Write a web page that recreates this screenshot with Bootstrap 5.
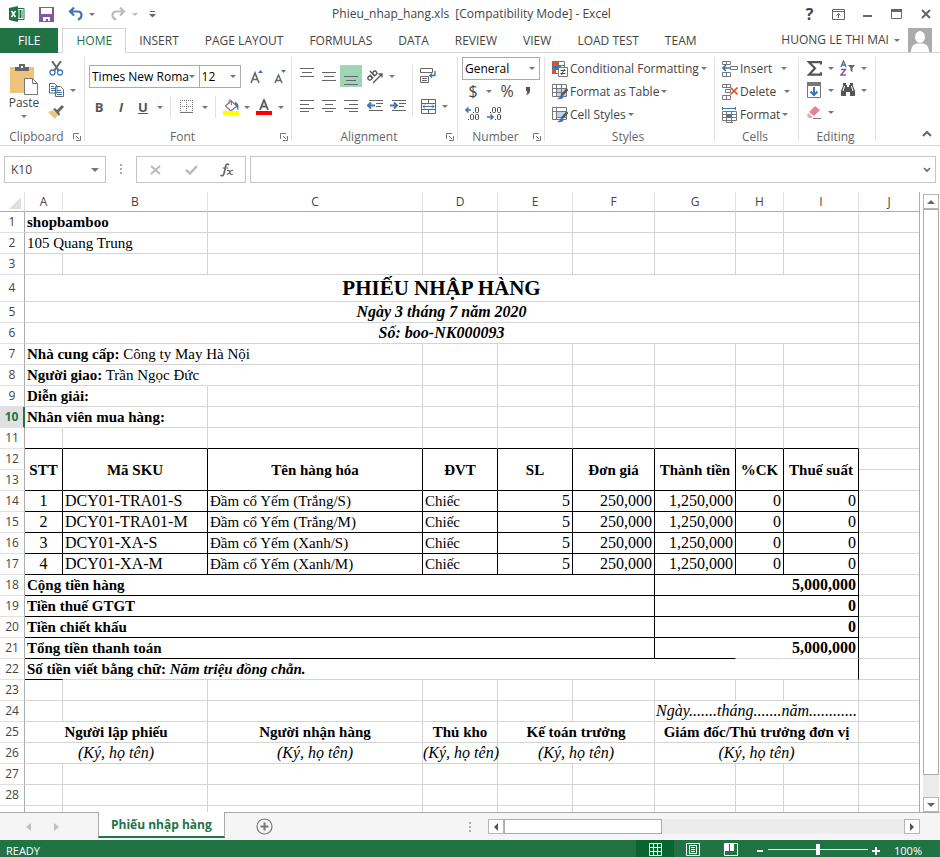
<!DOCTYPE html>
<html lang="vi">
<head>
<meta charset="utf-8">
<meta name="viewport" content="width=device-width, initial-scale=1">
<title>Phieu_nhap_hang.xls - Excel</title>
<link href="https://cdn.jsdelivr.net/npm/bootstrap@5.3.0/dist/css/bootstrap.min.css" rel="stylesheet">
<style>
:root{--xl-green:#217346;--xl-line:#d4d4d4;--xl-mid:#ababab;--xl-ink:#444;--xl-icon:#666}
body{font-family:"Open Sans","Noto Sans",sans-serif;font-size:12px;line-height:16px;color:var(--xl-ink);background:#fff}
svg{display:block;flex:none}
button,select,input{font:inherit;color:inherit}
.ib{display:inline-flex;align-items:center;justify-content:center;border:0;background:none;padding:0;height:22px;flex:none}
.tip::after{content:"";border:3px solid transparent;border-top-color:#777;border-bottom:0}
.tip.pale::after{border-top-color:#bbb}
.w8{width:8px}.w10{width:10px}.w12{width:12px}.w16{width:16px}.w18{width:18px}.w20{width:20px}.w22{width:22px}.w24{width:24px}.w26{width:26px}.w29{width:29px}.w44{width:44px}
.titlebar,.tabs,.ribbon,.formula,.strip,.status{flex:none}
.titlebar{height:28px}
.tabs{height:25px;border-bottom:1px solid var(--xl-line)}
.tabs a{color:var(--xl-ink);text-decoration:none;padding:0 13px;height:25px;line-height:25px;white-space:nowrap}
.tabs a.file-tab{background:var(--xl-green);color:#fff;padding:0 18px;margin-right:4px}
.tabs a.here{color:var(--xl-green);border:1px solid var(--xl-line);border-bottom-color:#fff;background:#fff;line-height:24px}
.ribbon{height:93px;border-bottom:1px solid var(--xl-line);padding-top:4px}
.group{height:88px;background:linear-gradient(#e1e1e1,#e1e1e1) right top/1px 84px no-repeat;padding-right:1px;flex:none;display:flex;flex-direction:column}
.group-foot{height:16px;color:#666;margin-top:auto;display:flex;align-items:center;padding-right:3px}
.group-foot span{flex:1;text-align:center}
.g-clip{width:85px}.g-font{width:207px}.g-align{width:166px}.g-num{width:87px}.g-style{width:170px}.g-cell{width:84px}.g-edit{width:77px}
.vrule{width:1px;height:22px;background:#e1e1e1;flex:none}
.pick{appearance:none;border:1px solid var(--xl-mid);border-radius:0;height:23px;padding:0 2px;color:#000;background:#fff url("data:image/svg+xml,%3Csvg xmlns='http://www.w3.org/2000/svg' width='6' height='3'%3E%3Cpath d='M0 0h6L3 3z' fill='%23777'/%3E%3C/svg%3E") no-repeat right 4px center}
.pick-font{width:112px}.pick-size{width:43px;margin-left:-1px}.pick-num{width:78px}
.font-row{padding-left:3px}
.glyph-b{font-size:13px;font-weight:700;color:#555}
.cmd{display:flex;align-items:center;border:0;background:none;padding:0;height:23px;white-space:nowrap}
.cmd svg{margin-right:2px}
.cmd::after{margin-left:2px}
.cmd-col{padding-left:7px}
.on{background:#9fd5b7}
.formula{height:46px;padding:10px 4px 0}
.formula .box{height:27px;border:1px solid #c6c6c6;background:#fff;display:flex;align-items:center}
.formula input{border:0;outline:0;background:none;min-width:0;padding:0 6px}
.name-box{width:102px}.fx-box{width:110px}
.work{min-height:0}
.grid-wrap{overflow:hidden;min-width:0;border-right:1px solid var(--xl-mid)}
.cells{table-layout:fixed;width:100%;border-collapse:separate;border-spacing:0;color:#000;font-family:"Liberation Serif",serif;font-size:15px;line-height:20px}
.cells th,.cells td{height:21px;padding:0 2px;white-space:nowrap;border-right:1px solid var(--xl-line);border-bottom:1px solid var(--xl-line);vertical-align:middle}
.cells tbody th,.cells thead th{font-family:"Open Sans","Noto Sans",sans-serif;font-size:12px;font-weight:400;color:var(--xl-ink);text-align:center}
.cells thead th{height:20px;line-height:19px;border-bottom-color:var(--xl-mid);border-right-color:#e1e1e1}
.cells tbody th{border-right-color:var(--xl-mid);border-bottom-color:#e1e1e1;padding:0}
.cells tbody th.sel{background:#e1e1e1;color:var(--xl-green);font-weight:700;border-right:2px solid var(--xl-green)}
.cells td:last-child,.cells thead th:last-child{border-right:0}
.cells td.open{border-right-color:transparent}
.cells tr.ruled td:not(:last-child),.cells td.kb{border-bottom-color:#000}
.cells tr.boxed td:not(:last-child),.cells td.kr{border-right-color:#000}
.cells .tall td,.cells .tall th{height:27px}
.fs-title{font-size:21px}
.cells .num{font-size:16px}
.corner{border-style:solid;border-color:transparent transparent #dfdfdf transparent;border-width:0 0 12px 12px;width:0;margin:2px 0 0 9px}
.vbar{width:20px;padding:2px 1px 0 3px;flex:none}
.sbtn{border:1px solid #b5b5b5;background:#fff;width:16px;height:15px;padding:0;display:flex;align-items:center;justify-content:center;flex:none}
.vthumb{border:1px solid var(--xl-mid);background:#fff;flex:567}
.track{background:#ececec;flex:22}
.strip{height:28px;background:#f5f5f5;border-top:1px solid var(--xl-mid)}
.strip .sheet-nav{gap:5px;padding:0 30px 0 17px}
.sheet-tab{height:26px;margin-top:-1px;background:#fff;border:1px solid var(--xl-mid);border-top:0;border-bottom:2px solid var(--xl-green);color:var(--xl-green);font-weight:700;padding:0 12px;line-height:26px;text-decoration:none;align-self:flex-start}
.hbar{width:46%;height:15px;margin-right:20px}
.hbar .hthumb{flex:157;border:1px solid var(--xl-mid);background:#fff}
.hbar .track{flex:243}
.status{height:17px;background:var(--xl-green);color:#fff;overflow:hidden;font-size:11px;padding:0 18px 0 6px}
.status .ib{height:17px;align-items:flex-start;padding-top:3px;width:38px}
.status .active-view{background:#0a6332}
.percent{margin-left:12px}
.zoom{appearance:none;background:linear-gradient(#fff,#fff) center/100% 1px no-repeat;width:100px;height:11px}
.zoom::-webkit-slider-thumb{appearance:none;width:4px;height:11px;background:#fff}
</style>
<script src="https://cdn.jsdelivr.net/npm/bootstrap@5.3.0/dist/js/bootstrap.bundle.min.js"></script>
</head>
<body class="vh-100 d-flex flex-column overflow-hidden">

<header class="titlebar d-flex align-items-center">
  <svg class="ms-2" width="18" height="16" viewBox="0 0 18 16"><path fill="#fff" stroke="#217346" d="M9.500 2.500h6.500v11h-6.500z"/><path stroke="#217346" d="M10 5h5M10 7h5M10 9h5M10 11h5M12.500 4v8"/><path fill="#217346" d="M1 2l9-2v16l-9-2z"/><path stroke="#fff" stroke-width="1.500" d="M3.500 5l4 6M7.500 5l-4 6"/></svg>
  <button class="ib w24 mx-2" aria-label="Save"><svg width="15" height="15"><path fill="#8854a8" d="M0 0h15v15H0z"/><path fill="#fff" d="M2 1h11v6H2zM4 10h7v4H9v-2H7v2H4z"/></svg></button>
  <button class="ib w20" aria-label="Undo"><svg width="16" height="14" viewBox="0 0 16 14"><path fill="none" stroke="#3f76b0" stroke-width="2.200" d="M2 4.500h7.500c5 0 5.500 6 .5 8.300M6 .6L2 4.500l4 4"/></svg></button>
  <button class="ib w12 tip" aria-label="Undo list"></button>
  <button class="ib w24 ms-2" aria-label="Redo"><svg width="16" height="14" viewBox="0 0 16 14"><path fill="none" stroke="#bcbcbc" stroke-width="2.200" d="M14 4.500H6.500c-5 0-5.500 6-.5 8.300M10 .6l4 3.900-4 4"/></svg></button>
  <button class="ib w10 tip pale" aria-label="Redo list"></button>
  <button class="ib w24" aria-label="Customize toolbar"><svg width="7" height="7"><path fill="#666" d="M1 0h5v1H1zM0 3h7L3.500 6.500z"/></svg></button>
  <div class="flex-fill text-center pe-3">Phieu_nhap_hang.xls&nbsp; [Compatibility Mode] - Excel</div>
  <button class="ib w29 fw-bold fs-6" aria-label="Help">?</button>
  <button class="ib w29" aria-label="Ribbon display"><svg width="13" height="11" fill="none" stroke="#666"><path d="M.5.500h12v10H.5zM0 2.500h13M6.500 9V4.500M4.500 6.500l2-2 2 2"/></svg></button>
  <button class="ib w29" aria-label="Minimize"><svg width="9" height="9"><path fill="#666" d="M0 5h9v2H0z"/></svg></button>
  <button class="ib w29" aria-label="Maximize"><svg width="11" height="10"><path fill="none" stroke="#666" d="M.5.500h10v9H.5z"/><path fill="#666" d="M0 0h11v3H0z"/></svg></button>
  <button class="ib w29" aria-label="Close"><svg width="10" height="10"><path stroke="#666" stroke-width="2" d="M1 1l8 8M9 1L1 9"/></svg></button>
</header>

<nav class="tabs d-flex">
  <a class="file-tab" href="#">FILE</a><a class="here" href="#">HOME</a><a href="#">INSERT</a><a href="#">PAGE LAYOUT</a><a href="#">FORMULAS</a><a href="#">DATA</a><a href="#">REVIEW</a><a href="#">VIEW</a><a href="#">LOAD TEST</a><a href="#">TEAM</a>
  <div class="ms-auto d-flex align-items-center pe-2">
    <button class="cmd tip">HUONG LE THI MAI&nbsp;</button>
    <svg class="ms-2" width="24" height="24" viewBox="0 0 24 24"><path fill="#ababab" d="M0 0h24v24H0z"/><ellipse cx="12" cy="9" rx="5" ry="6" fill="#fff"/><path fill="#fff" d="M3 24c0-6 3-8 6-8.500h6c3 .5 6 2.500 6 8.500z"/></svg>
  </div>
</nav>

<section class="ribbon d-flex" aria-label="Ribbon">
  <div class="group g-clip">
    <div class="d-flex">
      <button class="ib w44 h-auto flex-column ps-1" >
        <svg width="30" height="32" viewBox="0 0 30 32"><path fill="#eec37c" d="M1 4h24v26H1z"/><path fill="#666" d="M6 4h4V1h6v3h4v4H6z"/><path fill="#fff" d="M12 3h2v2h-2z"/><path fill="#fff" stroke="#777" d="M15.500 15.500h8l5 5v11h-13z"/><path fill="none" stroke="#777" d="M23.500 15.500v5h5"/></svg>
        <span>Paste</span><span class="tip d-flex mt-1"></span>
      </button>
      <div class="d-flex flex-column">
        <button class="ib w24" aria-label="Cut"><svg width="15" height="15" viewBox="0 0 15 15"><path stroke="#666" stroke-width="2" d="M3 0l7 10M12 0L5 10"/><g fill="none" stroke="#3f76b0" stroke-width="1.300"><circle cx="3.500" cy="11.500" r="2.500"/><circle cx="11" cy="11.500" r="2.500"/></g></svg></button>
        <div class="d-flex"><button class="ib w24" aria-label="Copy"><svg width="15" height="14" viewBox="0 0 15 14"><path fill="#fff" stroke="#666" d="M.5.500h5l2.500 2.500v7H.5zM6.500 3.500h5l3 3v7h-8z"/><path stroke="#3f76b0" d="M2 3.500h3M2 5.500h4M2 7.500h4M8 7.500h4M8 9.500h5M8 11.500h5"/></svg></button><button class="ib w10 tip" aria-label="Copy options"></button></div>
        <button class="ib w24" aria-label="Format Painter"><svg width="16" height="14" viewBox="0 0 16 14"><path fill="#eec37c" d="M0 7l5-2 5 5-3 4z"/><path fill="#666" d="M5 4l2-1 2 2 5-5 2 2-5 5 1 2-1 2z"/></svg></button>
      </div>
    </div>
    <div class="group-foot"><span>Clipboard</span><svg width="8" height="8"><path fill="none" stroke="#777" d="M.5 6V.500H6M3 3l3 3M7.500 3v4.500H3"/></svg></div>
  </div>

  <div class="group g-font">
    <div class="d-flex align-items-center ps-1 mt-2">
      <select class="pick pick-font" aria-label="Font"><option>Times New Roma</option></select>
      <select class="pick pick-size" aria-label="Font size"><option>12</option></select>
      <button class="ib w24 ms-1" aria-label="Grow font"><svg width="14" height="14" fill="none" stroke="#666" stroke-width="1.600"><path d="M1 13L5 3l4 10M2.500 9.500h5"/><path fill="#3f76b0" stroke="none" d="M8 3h5l-2.500-3z"/></svg></button>
      <button class="ib w22" aria-label="Shrink font"><svg width="13" height="14" fill="none" stroke="#666" stroke-width="1.500"><path d="M1 13l3.500-8L8 13M2.500 10.500h4"/><path fill="#3f76b0" stroke="none" d="M7 0h5L9.500 3z"/></svg></button>
    </div>
    <div class="font-row d-flex align-items-center mt-2">
      <button class="ib w22 glyph-b">B</button><button class="ib w22 glyph-b fst-italic">I</button><button class="ib w22 glyph-b text-decoration-underline">U</button><button class="ib w12 tip" aria-label="Underline style"></button>
      <i class="vrule mx-1"></i>
      <button class="ib w24" aria-label="Borders"><svg width="14" height="14" fill="none" stroke="#777"><path stroke-dasharray="1 1" d="M0 .500h13M0 6.500h13M.5 0v13M6.500 0v13M12.500 0v13"/><path d="M0 12.500h13"/></svg></button><button class="ib w12 tip" aria-label="Border list"></button>
      <i class="vrule mx-1"></i>
      <button class="ib w22" aria-label="Fill colour"><svg width="17" height="16" viewBox="0 0 17 16"><path fill="#fff" stroke="#777" stroke-width="1.200" d="M8 2l6 5-6 5-5.500-5z"/><path fill="none" stroke="#777" d="M6 5V1.500Q7 0 8.500 1.500V6"/><path fill="#3f76b0" d="M12 3c4 1 4 5 3 9-1-2-1-5-3-6z"/><path fill="#ff0" d="M0 12h16v4H0z"/></svg></button><button class="ib w10 tip" aria-label="Fill list"></button>
      <button class="ib w24" aria-label="Font colour"><svg width="16" height="16"><path fill="none" stroke="#666" stroke-width="2" d="M4 11l4-10 4 10M5.500 7.500h5"/><path fill="red" d="M0 12h16v4H0z"/></svg></button><button class="ib w10 tip" aria-label="Font colour list"></button>
    </div>
    <div class="group-foot"><span>Font</span><svg width="8" height="8"><path fill="none" stroke="#777" d="M.5 6V.500H6M3 3l3 3M7.500 3v4.500H3"/></svg></div>
  </div>

  <div class="group g-align">
    <div class="d-flex ps-1 pt-2">
      <div class="d-flex flex-column gap-2">
        <div class="d-flex">
          <button class="ib w22" aria-label="Top align"><svg width="14" height="18" stroke="#666"><path d="M0 1.500h14M2 5.500h10M0 9.500h14"/></svg></button>
          <button class="ib w22" aria-label="Middle align"><svg width="14" height="18" stroke="#666"><path d="M0 5.500h14M2 9.500h10M0 13.500h14"/></svg></button>
          <button class="ib w22 on" aria-label="Bottom align"><svg width="14" height="18" stroke="#666"><path d="M0 9.500h14M2 13.500h10M0 17.500h14"/></svg></button>
          <button class="ib w26" aria-label="Orientation"><svg width="18" height="18" viewBox="0 0 18 18" fill="none" stroke="#555" stroke-width="1.300"><g transform="rotate(-45 6 9)"><circle cx="3" cy="9" r="2"/><path d="M5.300 6.500v5M8 4v7.500"/><circle cx="10" cy="9" r="2"/></g><path d="M7 16l9-9M12.500 7H16v3.500"/></svg></button>
          <button class="ib w8 tip" aria-label="Orientation list"></button>
        </div>
        <div class="d-flex">
          <button class="ib w22" aria-label="Align left"><svg width="14" height="12" stroke="#666"><path d="M0 .500h14M0 4.500h9M0 8.500h14M0 11.500h9"/></svg></button>
          <button class="ib w22" aria-label="Center"><svg width="14" height="12" stroke="#666"><path d="M0 .500h14M3 4.500h8M0 8.500h14M3 11.500h8"/></svg></button>
          <button class="ib w22" aria-label="Align right"><svg width="14" height="12" stroke="#666"><path d="M0 .500h14M5 4.500h9M0 8.500h14M5 11.500h9"/></svg></button>
          <button class="ib w26" aria-label="Decrease indent"><svg width="16" height="12"><path stroke="#666" d="M2 .500h14M9 3.500h7M9 6.500h5M2 10.500h14"/><path fill="none" stroke="#3f76b0" stroke-width="2" d="M8 5.500H1M4 2.500l-3 3 3 3"/></svg></button>
          <button class="ib w20" aria-label="Increase indent"><svg width="16" height="12"><path stroke="#666" d="M2 .500h14M9 3.500h7M9 6.500h5M2 10.500h14"/><path fill="none" stroke="#3f76b0" stroke-width="2" d="M0 5.500h7M4 2.500l3 3-3 3"/></svg></button>
        </div>
      </div>
      <i class="vrule h-auto ms-1 me-1"></i>
      <div class="d-flex flex-column gap-2">
        <button class="ib w22" aria-label="Wrap text"><svg width="17" height="16" fill="none" stroke="#666"><path d="M.5.500h12v4H.5zM.5 8.500h8v6H.5zM2 10.500h5M2 12.500h5"/><path stroke="#3f76b0" stroke-width="1.400" d="M15 3v4.500h-5M12 5.500l-2 2 2 2"/></svg></button>
        <div class="d-flex"><button class="ib w22" aria-label="Merge and center"><svg width="15" height="15" fill="none" stroke="#666"><path d="M.5.500h14v14H.5zM0 4.500h15M0 10.500h15M7.500 0v4M7.500 11v4"/><path stroke="#3f76b0" d="M2 7.500h11M4 5.500l-2 2 2 2M11 5.500l2 2-2 2"/></svg></button><button class="ib w12 tip" aria-label="Merge list"></button></div>
      </div>
    </div>
    <div class="group-foot"><span>Alignment</span><svg width="8" height="8"><path fill="none" stroke="#777" d="M.5 6V.500H6M3 3l3 3M7.500 3v4.500H3"/></svg></div>
  </div>

  <div class="group g-num">
    <div class="ps-1">
      <select class="pick pick-num d-block" aria-label="Number format"><option>General</option></select>
      <div class="d-flex"><button class="ib w22 fs-6">$</button><button class="ib w10 tip" aria-label="Currency list"></button><button class="ib w26 fs-6">%</button><button class="ib w16" aria-label="Comma style"><svg width="6" height="8"><path fill="#555" d="M1 0h4v4Q5 7 1 8q2-2 1-4H1z"/></svg></button></div>
      <div class="d-flex"><button class="ib w22" aria-label="Increase decimal"><svg width="16" height="15" fill="none" stroke="#444"><path d="M8 6.500h1M3 13.500h1"/><rect x="10.500" y="1.500" width="3" height="5" rx="1"/><rect x="5.500" y="8.500" width="3" height="5" rx="1"/><rect x="10.500" y="8.500" width="3" height="5" rx="1"/><path stroke="#3f76b0" stroke-width="1.600" d="M6 4H1M3.500 1.500L1 4l2.500 2.500"/></svg></button><button class="ib w22" aria-label="Decrease decimal"><svg width="16" height="15" fill="none" stroke="#444"><path d="M3 6.500h1M8 13.500h1"/><rect x="5.500" y="1.500" width="3" height="5" rx="1"/><rect x="10.500" y="1.500" width="3" height="5" rx="1"/><rect x="10.500" y="8.500" width="3" height="5" rx="1"/><path stroke="#3f76b0" stroke-width="1.600" d="M0 11h5.500M3.500 8.500L6 11l-2.500 2.500"/></svg></button></div>
    </div>
    <div class="group-foot"><span>Number</span><svg width="8" height="8"><path fill="none" stroke="#777" d="M.5 6V.500H6M3 3l3 3M7.500 3v4.500H3"/></svg></div>
  </div>

  <div class="group g-style">
    <div class="cmd-col">
      <button class="cmd tip"><svg width="16" height="16" fill="none" stroke="#777"><path d="M.5.500h12v12H.5zM0 4.500h12M0 8.500h12M6.500 0v12"/><path fill="#d9532c" stroke="none" d="M0 0h6v4H0zM0 9h4v4H0z"/><path fill="#3f76b0" stroke="none" d="M0 5h9v3H0z"/><path fill="#fff" d="M6.500 6.500h9v9h-9z"/><path stroke="#444" d="M8.500 9.500h5M8.500 12.500h5M12.500 8l-3 6"/></svg>Conditional Formatting</button>
      <button class="cmd tip"><svg width="16" height="16" fill="none" stroke="#777"><path fill="#fff" d="M.5.500h14v12H.5z"/><path fill="#bcd3ea" d="M4.500 4.500h10v8h-10z"/><path d="M0 4.500h15M0 8.500h15M4.500 0v12M9.500 0v12"/><path stroke="#555" stroke-width="2.500" d="M15.500 5L10 11"/><path fill="#3f76b0" stroke="none" d="M9 10l3 2q-1 4-7 3 3-1 4-5z"/></svg>Format as Table</button>
      <button class="cmd tip"><svg width="16" height="16" fill="none" stroke="#777"><path fill="#fff" d="M.5.500h14v12H.5z"/><path fill="#bcd3ea" d="M4.500 4.500h10v6h-10z"/><path d="M0 4.500h15M4.500 0v12"/><path stroke="#555" stroke-width="2.500" d="M15.500 5L10 11"/><path fill="#3f76b0" stroke="none" d="M9 10l3 2q-1 4-7 3 3-1 4-5z"/></svg>Cell Styles</button>
    </div>
    <div class="group-foot"><span>Styles</span></div>
  </div>

  <div class="group g-cell">
    <div class="cmd-col">
      <button class="cmd tip"><svg width="16" height="16" fill="none" stroke="#777"><path d="M.5.500h8v3h-8zM4.500 0v3M.5 11.500h8v4h-8zM4.500 11v4M8.500 5.500h7v3h-7z"/><path stroke="#3f76b0" stroke-width="1.600" d="M8 7H1M4 4L1 7l3 3"/></svg>Insert&nbsp;&nbsp;</button>
      <button class="cmd tip"><svg width="16" height="16" fill="none" stroke="#777"><path d="M.5.500h8v3h-8zM4.500 0v3M.5 11.500h8v4h-8zM4.500 11v4M3.500 5.500h5v3h-5z"/><path stroke="#d9532c" stroke-width="1.600" d="M8.500 3.500l7 7M15.500 3.500l-7 7"/></svg>Delete&nbsp;&nbsp;</button>
      <button class="cmd tip"><svg width="16" height="16" fill="none" stroke="#777"><path d="M.5 4.500h14v9H.5zM0 7.500h15M0 10.500h15M4.500 4v11M9.500 4v11M4 15.500h7"/><path fill="#3f76b0" stroke="none" d="M5 7h5v4H5z"/><path stroke="#3f76b0" d="M.5 0v3M13.500 0v3M1 1.500h12"/></svg>Format</button>
    </div>
    <div class="group-foot"><span>Cells</span></div>
  </div>

  <div class="group g-edit">
    <div class="ps-1">
      <div class="d-flex"><button class="ib w22" aria-label="Sum"><svg width="15" height="15"><path fill="none" stroke="#555" stroke-width="2.200" d="M14 3.500V1.200H2l6 6-6 6.500h12v-2.500"/></svg></button><button class="ib w12 tip" aria-label="Sum list"></button><button class="ib w22" aria-label="Sort and filter"><svg width="16" height="16" fill="none" stroke-width="1.400"><path stroke="#3f76b0" d="M1 7l2.500-6L6 7M2 5h3"/><path stroke="#8854a8" d="M1 9.500h4.500L1 15h5"/><path fill="#666" d="M8 5h7l-2.500 3v4l-2-1V8z"/></svg></button><button class="ib w10 tip" aria-label="Sort list"></button></div>
      <div class="d-flex"><button class="ib w22" aria-label="Fill"><svg width="14" height="16"><path fill="#fff" stroke="#777" d="M.5.500h13v15H.5z"/><path fill="#777" d="M0 0h14v4H0z"/><path fill="none" stroke="#3f76b0" stroke-width="2" d="M7 5v8M3.500 9.500L7 13l3.500-3.500"/></svg></button><button class="ib w12 tip" aria-label="Fill options"></button><button class="ib w22" aria-label="Find"><svg width="16" height="14"><path fill="#555" d="M3 0h3v2h1v2h2V2h1V0h3v3l2 5v5h-5V9H6v4H1V8l2-5z"/><path stroke="#fff" d="M4.500 3L3 8M11.500 3L13 8"/></svg></button><button class="ib w10 tip" aria-label="Find options"></button></div>
      <div class="d-flex"><button class="ib w22" aria-label="Clear"><svg width="14" height="13"><path fill="#e8829a" d="M8 0l5 4-6 6-5-4z"/><path fill="#e8a5b4" d="M1 7l5 4-2 1H2L0 10z"/><path stroke="#777" d="M6 12.500h8"/></svg></button><button class="ib w12 tip" aria-label="Clear options"></button></div>
    </div>
    <div class="group-foot"><span>Editing</span></div>
  </div>
  <button class="ib w18 ms-auto align-self-end me-1" aria-label="Collapse ribbon"><svg width="10" height="6"><path fill="none" stroke="#666" stroke-width="2" d="M1 5l4-4 4 4"/></svg></button>
</section>

<section class="formula d-flex">
  <div class="box name-box"><input class="w-75" aria-label="Name box" value="K10"><button class="ib w20 ms-auto" aria-label="Names"><svg width="8" height="4"><path fill="#777" d="M0 0h8L4 4z"/></svg></button></div>
  <svg width="30" height="27"><path fill="#aaa" d="M14 8h2v2h-2zM14 12h2v2h-2zM14 16h2v2h-2z"/></svg>
  <div class="box fx-box justify-content-around">
    <button class="ib w24" aria-label="Cancel"><svg width="11" height="10"><path stroke="#bbb" stroke-width="2" d="M1 1l9 8M10 1L1 9"/></svg></button>
    <button class="ib w24" aria-label="Enter"><svg width="13" height="10"><path fill="none" stroke="#bbb" stroke-width="2.500" d="M1 5l4 3.500L12 1"/></svg></button>
    <button class="ib w24" aria-label="Insert function"><svg width="14" height="16" fill="none" stroke="#666" stroke-linecap="round"><path stroke-width="1.700" d="M8.500 2.500Q6.500 1 5.700 4L4 11.500Q3.200 14.500 1 13.500"/><path stroke-width="1.200" d="M3 6h5M7.500 8.500q1.500-.7 2 1l.8 2q.5 1.500 2 .7M12.500 8.300Q11 8 10 10t-2.700 2.200"/></svg></button>
  </div>
  <div class="box flex-fill ms-1"><input class="flex-fill" aria-label="Formula"><button class="ib w16" aria-label="Expand formula bar"><svg width="8" height="6"><path fill="none" stroke="#666" stroke-width="1.600" d="M1 1l3 3 3-3"/></svg></button></div>
</section>

<main class="work d-flex flex-fill">
  <div class="grid-wrap flex-fill">
    <table class="cells">
      <colgroup><col style="width:25px"><col style="width:38px"><col style="width:145px"><col style="width:215px"><col style="width:75px"><col style="width:75px"><col style="width:82px"><col style="width:81px"><col style="width:48px"><col style="width:75px"><col></colgroup>
      <thead><tr><th class="p-0" aria-label="Select all"><div class="corner"></div></th><th>A</th><th>B</th><th>C</th><th>D</th><th>E</th><th>F</th><th>G</th><th>H</th><th>I</th><th>J</th></tr></thead>
      <tbody>
        <tr><th>1</th><td class="open fw-bold">shopbamboo</td><td></td><td></td><td></td><td></td><td></td><td></td><td></td><td></td><td></td></tr>
        <tr><th>2</th><td class="open">105 Quang Trung</td><td></td><td></td><td></td><td></td><td></td><td></td><td></td><td></td><td></td></tr>
        <tr><th>3</th><td></td><td></td><td></td><td></td><td></td><td></td><td></td><td></td><td></td><td></td></tr>
        <tr class="tall"><th>4</th><td colspan="9" class="text-center fw-bold fs-title">PHIẾU NHẬP HÀNG</td><td></td></tr>
        <tr><th>5</th><td colspan="9" class="text-center fw-bold fst-italic num">Ngày 3 tháng 7 năm 2020</td><td></td></tr>
        <tr><th>6</th><td colspan="9" class="text-center fw-bold fst-italic num">Số: boo-NK000093</td><td></td></tr>
        <tr><th>7</th><td class="open"><b>Nhà cung cấp:</b> Công ty May Hà Nội</td><td class="open"></td><td></td><td></td><td></td><td></td><td></td><td></td><td></td><td></td></tr>
        <tr><th>8</th><td class="open"><b>Người giao:</b> Trần Ngọc Đức</td><td class="open"></td><td></td><td></td><td></td><td></td><td></td><td></td><td></td><td></td></tr>
        <tr><th>9</th><td class="open fw-bold">Diễn giải:</td><td></td><td></td><td></td><td></td><td></td><td></td><td></td><td></td><td></td></tr>
        <tr><th class="sel">10</th><td class="open fw-bold">Nhân viên mua hàng:</td><td></td><td></td><td></td><td></td><td></td><td></td><td></td><td></td><td></td></tr>
        <tr class="ruled"><th>11</th><td></td><td></td><td></td><td></td><td></td><td></td><td></td><td></td><td></td><td></td></tr>
        <tr class="ruled boxed text-center fw-bold"><th>12</th><td rowspan="2">STT</td><td rowspan="2">Mã SKU</td><td rowspan="2">Tên hàng hóa</td><td rowspan="2">ĐVT</td><td rowspan="2">SL</td><td rowspan="2">Đơn giá</td><td rowspan="2">Thành tiền</td><td rowspan="2">%CK</td><td rowspan="2">Thuế suất</td><td></td></tr>
        <tr><th>13</th><td></td></tr>
        <tr class="ruled boxed"><th>14</th><td class="text-center num">1</td><td class="num">DCY01-TRA01-S</td><td>Đầm cổ Yếm (Trắng/S)</td><td>Chiếc</td><td class="text-end num">5</td><td class="text-end num">250,000</td><td class="text-end num">1,250,000</td><td class="text-end num">0</td><td class="text-end num">0</td><td></td></tr>
        <tr class="ruled boxed"><th>15</th><td class="text-center num">2</td><td class="num">DCY01-TRA01-M</td><td>Đầm cổ Yếm (Trắng/M)</td><td>Chiếc</td><td class="text-end num">5</td><td class="text-end num">250,000</td><td class="text-end num">1,250,000</td><td class="text-end num">0</td><td class="text-end num">0</td><td></td></tr>
        <tr class="ruled boxed"><th>16</th><td class="text-center num">3</td><td class="num">DCY01-XA-S</td><td>Đầm cổ Yếm (Xanh/S)</td><td>Chiếc</td><td class="text-end num">5</td><td class="text-end num">250,000</td><td class="text-end num">1,250,000</td><td class="text-end num">0</td><td class="text-end num">0</td><td></td></tr>
        <tr class="ruled boxed"><th>17</th><td class="text-center num">4</td><td class="num">DCY01-XA-M</td><td>Đầm cổ Yếm (Xanh/M)</td><td>Chiếc</td><td class="text-end num">5</td><td class="text-end num">250,000</td><td class="text-end num">1,250,000</td><td class="text-end num">0</td><td class="text-end num">0</td><td></td></tr>
        <tr class="ruled boxed fw-bold"><th>18</th><td colspan="6">Cộng tiền hàng</td><td colspan="3" class="text-end num">5,000,000</td><td></td></tr>
        <tr class="ruled boxed fw-bold"><th>19</th><td colspan="6">Tiền thuế GTGT</td><td colspan="3" class="text-end num">0</td><td></td></tr>
        <tr class="ruled boxed fw-bold"><th>20</th><td colspan="6">Tiền chiết khấu</td><td colspan="3" class="text-end num">0</td><td></td></tr>
        <tr class="fw-bold"><th>21</th><td colspan="6" class="kb kr">Tổng tiền thanh toán</td><td class="open kb"></td><td class="open"></td><td class="kr text-end num">5,000,000</td><td></td></tr>
        <tr class="fw-bold"><th>22</th><td class="open kb">Số tiền viết bằng chữ: <i>Năm triệu đồng chẵn.</i></td><td colspan="8" class="kr"></td><td></td></tr>
        <tr><th>23</th><td></td><td></td><td></td><td></td><td></td><td></td><td></td><td></td><td></td><td></td></tr>
        <tr><th>24</th><td></td><td></td><td></td><td></td><td></td><td></td><td colspan="3" class="text-center fst-italic num px-0">Ngày.......tháng.......năm............</td><td></td></tr>
        <tr class="text-center fw-bold"><th>25</th><td colspan="2">Người lập phiếu</td><td>Người nhận hàng</td><td>Thủ kho</td><td colspan="2">Kế toán trưởng</td><td colspan="3">Giám đốc/Thủ trưởng đơn vị</td><td></td></tr>
        <tr class="text-center fst-italic"><th class="fst-normal">26</th><td colspan="2" class="num">(Ký, họ tên)</td><td class="num">(Ký, họ tên)</td><td class="num px-0">(Ký, họ tên)</td><td colspan="2" class="num">(Ký, họ tên)</td><td colspan="3" class="num">(Ký, họ tên)</td><td></td></tr>
        <tr><th>27</th><td></td><td></td><td></td><td></td><td></td><td></td><td></td><td></td><td></td><td></td></tr>
        <tr><th>28</th><td></td><td></td><td></td><td></td><td></td><td></td><td></td><td></td><td></td><td></td></tr>
        <tr aria-hidden="true"><th></th><td></td><td></td><td></td><td></td><td></td><td></td><td></td><td></td><td></td><td></td></tr>
      </tbody>
    </table>
  </div>
  <div class="vbar d-flex flex-column">
    <button class="sbtn" aria-label="Scroll up"><svg width="8" height="4"><path fill="#666" d="M0 4h8L4 0z"/></svg></button>
    <div class="vthumb"></div><div class="track"></div>
    <button class="sbtn" aria-label="Scroll down"><svg width="8" height="4"><path fill="#666" d="M0 0h8L4 4z"/></svg></button>
  </div>
</main>

<section class="strip d-flex align-items-center">
  <div class="sheet-nav d-flex">
    <button class="ib w22" aria-label="Previous sheet"><svg width="5" height="8"><path fill="#c0c0c0" d="M5 0v8L0 4z"/></svg></button>
    <button class="ib w24" aria-label="Next sheet"><svg width="5" height="8"><path fill="#c0c0c0" d="M0 0v8l5-4z"/></svg></button>
  </div>
  <a class="sheet-tab" href="#">Phiếu nhập hàng</a>
  <button class="ib w24 ms-4 me-auto" aria-label="New sheet"><svg class="ms-2" width="17" height="17" fill="none" stroke="#777"><circle cx="8.500" cy="8.500" r="7.500" stroke-width="1.200"/><path stroke-width="2" d="M4.500 8.500h8M8.500 4.500v8"/></svg></button>
  <svg class="me-3" width="3" height="12"><path fill="#aaa" d="M0 1h2v2H0zM0 5h2v2H0zM0 9h2v2H0z"/></svg>
  <div class="hbar d-flex">
    <button class="sbtn" aria-label="Scroll left"><svg width="4" height="8"><path fill="#555" d="M4 0v8L0 4z"/></svg></button>
    <div class="hthumb"></div><div class="track"></div>
    <button class="sbtn" aria-label="Scroll right"><svg width="4" height="8"><path fill="#555" d="M0 0v8l4-4z"/></svg></button>
  </div>
</section>

<footer class="status d-flex align-items-start">
  <span class="me-auto lh-lg">READY</span>
  <button class="ib active-view" aria-label="Normal view"><svg width="13" height="13"><path fill="none" stroke="#fff" d="M.5.500h12v12H.5zM4.500 0v13M8.500 0v13M0 4.500h13M0 8.500h13"/></svg></button>
  <button class="ib" aria-label="Page layout view"><svg width="14" height="13" fill="none" stroke="#fff"><path d="M.5.500h13v12H.5zM3.500 2.500h7v8h-7zM5 4.500h4M5 6.500h4M5 8.500h4"/></svg></button>
  <button class="ib" aria-label="Page break view"><svg width="14" height="13"><path fill="none" stroke="#fff" d="M.5.500h13v12H.5z"/><path fill="#fff" d="M1 1h4v7H1zM6 1h4v7H6z"/></svg></button>
  <svg class="ms-1" width="14" height="20"><path fill="#fff" d="M3 10h6v2H3z"/></svg>
  <input class="zoom mt-1" type="range" min="0" max="200" value="100" aria-label="Zoom">
  <svg class="ms-1" width="10" height="20"><path fill="#fff" d="M0 10h8v2H0zM3 7h2v8H3z"/></svg>
  <span class="percent lh-lg">100%</span>
</footer>
</body>
</html>
